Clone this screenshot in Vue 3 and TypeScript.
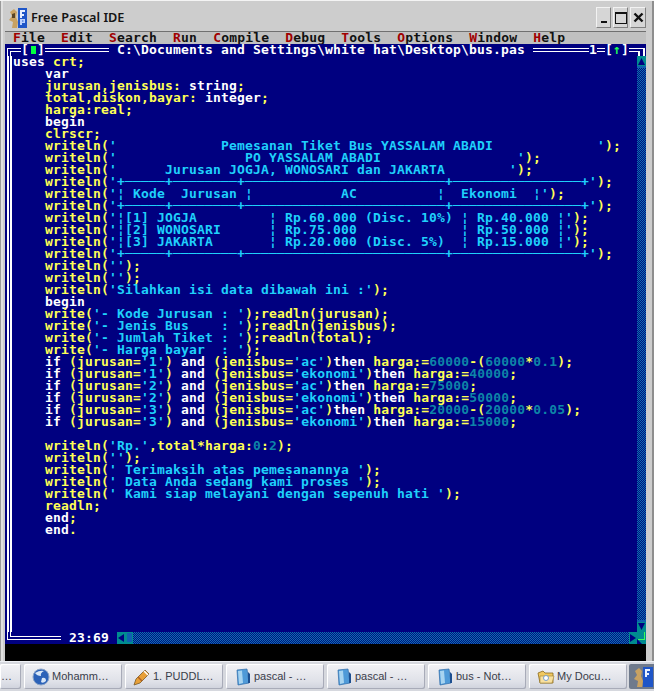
<script setup lang="ts">
type Tok = { t: string; c: string };

const rule = "'+" + '─'.repeat(5) + '+' + '─'.repeat(8) + '+' + '─'.repeat(25) + '+' + '─'.repeat(16) + "+'";
const row = (a: string, b: string, c: string) =>
  "writeln('" + ('¦[' + a).padEnd(19) + '¦ ' + b.padEnd(22) + '¦ ' + c.padEnd(10) + "¦');";

const source: string[] = [
  'uses crt;',
  '    var',
  '    jurusan,jenisbus: string;',
  '    total,diskon,bayar: integer;',
  '    harga:real;',
  '    begin',
  '    clrscr;',
  "    writeln('" + ' '.repeat(13) + 'Pemesanan Tiket Bus YASSALAM ABADI' + ' '.repeat(13) + "');",
  "    writeln('" + ' '.repeat(16) + 'PO YASSALAM ABADI' + ' '.repeat(17) + "');",
  "    writeln('" + ' '.repeat(6) + 'Jurusan JOGJA, WONOSARI dan JAKARTA' + ' '.repeat(8) + "');",
  '    writeln(' + rule + ');',
  "    writeln('¦ Kode  Jurusan ¦" + ' '.repeat(11) + 'AC' + ' '.repeat(10) + '¦  Ekonomi  ¦' + "');",
  '    writeln(' + rule + ');',
  '    ' + row('1] JOGJA', 'Rp.60.000 (Disc. 10%)', 'Rp.40.000'),
  '    ' + row('2] WONOSARI', 'Rp.75.000', 'Rp.50.000'),
  '    ' + row('3] JAKARTA', 'Rp.20.000 (Disc. 5%)', 'Rp.15.000'),
  '    writeln(' + rule + ');',
  "    writeln('');",
  "    writeln('');",
  "    writeln('Silahkan isi data dibawah ini :');",
  '    begin',
  "    write('- Kode Jurusan : ');readln(jurusan);",
  "    write('- Jenis Bus    : ');readln(jenisbus);",
  "    write('- Jumlah Tiket : ');readln(total);",
  "    write('- Harga bayar  : ');",
  "    if (jurusan='1') and (jenisbus='ac')then harga:=60000-(60000*0.1);",
  "    if (jurusan='1') and (jenisbus='ekonomi')then harga:=40000;",
  "    if (jurusan='2') and (jenisbus='ac')then harga:=75000;",
  "    if (jurusan='2') and (jenisbus='ekonomi')then harga:=50000;",
  "    if (jurusan='3') and (jenisbus='ac')then harga:=20000-(20000*0.05);",
  "    if (jurusan='3') and (jenisbus='ekonomi')then harga:=15000;",
  '',
  "    writeln('Rp.',total*harga:0:2);",
  "    writeln('');",
  "    writeln(' Terimaksih atas pemesanannya ');",
  "    writeln(' Data Anda sedang kami proses ');",
  "    writeln(' Kami siap melayani dengan sepenuh hati ');",
  '    readln;',
  '    end;',
  '    end.',
];

const tokenize = (s: string): Tok[] => {
  const re = /('[^']*')|(\d[\d.]*)|\b(uses|var|string|integer|begin|end|if|and|then)\b|(\s+)|([^'\d\s]+?(?=\b(?:uses|var|string|integer|begin|end|if|and|then)\b|'|\d|\s|$))/g;
  const out: Tok[] = [];
  for (const m of s.matchAll(re)) {
    if (m[1]) out.push({ t: m[1], c: 'str' });
    else if (m[2]) out.push({ t: m[2], c: 'num' });
    else if (m[3]) out.push({ t: m[3], c: 'kw' });
    else out.push({ t: m[0], c: 'id' });
  }
  return out;
};

const lines = source.map(tokenize);

const menu = ['File', 'Edit', 'Search', 'Run', 'Compile', 'Debug', 'Tools', 'Options', 'Window', 'Help'];

const tasks = [
  { label: 'Mohamm…', icon: 'globe' },
  { label: '1. PUDDL…', icon: 'pencil' },
  { label: 'pascal - …', icon: 'doc' },
  { label: 'pascal - …', icon: 'doc' },
  { label: 'bus - Not…', icon: 'doc' },
  { label: 'My Docu…', icon: 'folder' },
];
</script>

<template>
  <div class="screen">
    <div class="window">
      <header class="titlebar">
        <svg class="app-icon" width="20" height="22" viewBox="0 0 20 22">
          <path d="M2 5 L6 2 L9 5 L8 10 L10 15 L9 21 L4 21 L5 15 L1 13 L4 9 Z" fill="#c9a262" />
          <path d="M4 7 L7 6 L7 11 L4 11 Z" fill="#5a4526" />
          <rect x="10" y="1" width="9" height="20" fill="#1f56c8" />
          <path d="M12 3h5v2h-3v2h2v2h-2v2h-2z" fill="#e8f0ff" />
          <path d="M12 12h5v4h-3v2h-2zM14 13.5v1h1.5v-1z" fill="#bcd2ff" fill-rule="evenodd" />
        </svg>
        <span class="app-title">Free Pascal IDE</span>
        <div class="win-btns">
          <button class="win-btn"><i class="min-glyph"></i></button>
          <button class="win-btn"><i class="max-glyph"></i></button>
          <button class="win-btn close">
            <svg width="11" height="11" viewBox="0 0 11 11"><path d="M1.5 1.5 L9.5 9.5 M9.5 1.5 L1.5 9.5" stroke="#111" stroke-width="2.4" /></svg>
          </button>
        </div>
      </header>

      <div class="client">
        <nav class="menubar">
          <span v-for="m in menu" :key="m" class="menu-item"><b class="hot">{{ m[0] }}</b>{{ m.slice(1) }}</span>
        </nav>

        <div class="editor">
          <div class="frame-top">
            <svg class="corner" width="8" height="12" viewBox="0 0 8 12">
              <path d="M2 12V4h6v1H3v7zM5 12V7h3v1H6v4z" fill="#fff" />
            </svg>
            <i class="dbl w8"></i>
            <span class="cell">[</span><span class="cell"><i class="close-box"></i></span><span class="cell">]</span>
            <i class="dbl w64"></i>
            <span class="path"> C:\Documents and Settings\white hat\Desktop\bus.pas </span>
            <i class="dbl grow"></i>
            <span class="path">1</span>
            <i class="dbl w8"></i>
            <span class="cell">[</span><span class="cell up">↑</span><span class="cell">]</span>
            <i class="dbl w8"></i>
            <svg class="corner wide" width="9" height="12" viewBox="0 0 9 12">
              <path d="M0 4h8v8H6V5H0zM0 7h3v5H1V8H0z" fill="#fff" />
            </svg>
          </div>

          <div class="frame-body">
            <div class="frame-left"></div>
            <div class="code">
              <div v-for="(line, i) in lines" :key="i" class="line"><span v-for="(tok, j) in line" :key="j" :class="tok.c">{{ tok.t }}</span></div>
            </div>
            <div class="vscroll">
              <div class="arrow-cell">
                <svg width="9" height="12" viewBox="0 0 9 12"><path d="M4.5 2 L8 9 H1 Z" fill="#000080" /><rect y="10" width="9" height="2" fill="#1060b0" /></svg>
              </div>
              <div class="hatch grow"></div>
              <div class="arrow-cell">
                <svg width="9" height="12" viewBox="0 0 9 12"><rect width="9" height="2" fill="#1060b0" /><path d="M1 3 H8 L4.5 10 Z" fill="#000080" /></svg>
              </div>
            </div>
          </div>

          <div class="frame-bottom">
            <svg class="corner" width="8" height="12" viewBox="0 0 8 12">
              <path d="M2 0v8h6V7H3V0zM5 0v5h3V4H6V0z" fill="#fff" />
            </svg>
            <i class="dbl w48"></i>
            <span class="pos"> 23:69 </span>
            <span class="arrow-cell h">
              <svg width="8" height="12" viewBox="0 0 8 12"><path d="M1 6 L7 2 V10 Z" fill="#000080" /></svg>
            </span>
            <span class="arrow-cell h thumb"><i></i></span>
            <div class="hatch grow"></div>
            <span class="arrow-cell h">
              <svg width="8" height="12" viewBox="0 0 8 12"><path d="M7 6 L1 2 V10 Z" fill="#000080" /></svg>
            </span>
            <span class="arrow-cell h last">
              <svg width="9" height="12" viewBox="0 0 9 12"><path d="M7 0h1v8H1V7h6z" fill="#39ff5a" /><path d="M0 12 L0 7 L5 12Z" fill="#000080" /></svg>
            </span>
          </div>
        </div>

        <div class="black-strip"></div>
      </div>
    </div>

    <footer class="taskbar">
      <div class="task cut">…</div>
      <div v-for="(t, i) in tasks" :key="i" class="task">
        <svg v-if="t.icon === 'globe'" class="task-icon" width="18" height="18" viewBox="0 0 18 18">
          <circle cx="9" cy="9" r="8" fill="#2c62b8" stroke="#8aa4c8" />
          <path d="M3 5 Q8 2 12 3 Q8 5 9 8 Q5 8 3 5Z" fill="#d8e6f6" />
          <path d="M10 10 Q14 9 14 13 Q11 16 9 14Z" fill="#d8e6f6" />
        </svg>
        <svg v-else-if="t.icon === 'pencil'" class="task-icon" width="18" height="18" viewBox="0 0 18 18">
          <path d="M1 17 L3 11 L12 2 L16 6 L7 15 Z" fill="#e8a038" stroke="#7a5a28" stroke-width=".8" />
          <path d="M11 3 L15 7" stroke="#fff" stroke-width="1.5" />
          <path d="M5 9 L9 13" stroke="#b06020" stroke-width="1.4" />
        </svg>
        <svg v-else-if="t.icon === 'doc'" class="task-icon" width="18" height="18" viewBox="0 0 18 18">
          <path d="M3 2 L13 1 L15 15 L4 17 Z" fill="#4f9ad8" stroke="#2c6aa8" stroke-width=".7" />
          <path d="M4 3 L8 2.5 L9 15 L5 16 Z" fill="#a8d4f0" />
          <path d="M14 4 L16 6 V15 L14 15Z" fill="#1d4f90" />
        </svg>
        <svg v-else class="task-icon" width="18" height="18" viewBox="0 0 18 18">
          <path d="M1 5 L6 3 L8 5 L16 5 L16 15 L3 15 Z" fill="#f0c860" stroke="#8a6a20" stroke-width=".8" />
          <path d="M3 8 L17 8 L15 15 L3 15 Z" fill="#f8e0a0" stroke="#a08030" stroke-width=".6" />
          <circle cx="9" cy="10" r="2.5" fill="#fff" stroke="#7aa0c8" />
        </svg>
        <span class="task-label">{{ t.label }}</span>
      </div>
      <div class="task active">
        <svg width="20" height="22" viewBox="0 0 20 22">
          <path d="M2 5 L6 2 L9 5 L8 10 L10 15 L9 21 L4 21 L5 15 L1 13 L4 9 Z" fill="#c9a262" />
          <rect x="10" y="1" width="10" height="20" fill="#1f56c8" />
          <path d="M12 3h5v2h-3v2h2v2h-2v2h-2z" fill="#e8f0ff" />
        </svg>
      </div>
    </footer>
  </div>
</template>

<style>
html, body { margin: 0; padding: 0; background: #d0d0d0; }
</style>

<style scoped>
.screen {
  width: 654px;
  height: 691px;
  display: flex;
  flex-direction: column;
  overflow: hidden;
  background: #d4d6dc;
}
.window {
  height: 661px;
  box-sizing: border-box;
  padding-top: 3px;
  padding-left: 5px;
  padding-right: 8px;
  display: flex;
  flex-direction: column;
  background: #cdcdcd;
  border-top: 1px solid #f4f4f4;
  box-shadow: inset 1px 0 0 #9a9a9a, inset 3px 0 0 #e0e0e0, inset -2px 0 0 #8e8e8e;
}
.titlebar {
  height: 27px;
  flex: none;
  display: flex;
  align-items: center;
  box-sizing: border-box;
  padding-left: 3px;
}
.app-icon { flex: none; }
.app-title {
  margin-left: 3px;
  font: 600 12.7px/1 "Noto Sans", sans-serif;
  color: #151515;
}
.win-btns {
  margin-left: auto;
  display: flex;
  gap: 2px;
  align-items: center;
}
.win-btn {
  width: 15px;
  height: 21px;
  padding: 0;
  margin: 0;
  border: 0;
  border-top: 1px solid #f2f2f2;
  border-left: 1px solid #f2f2f2;
  border-right: 1px solid #808080;
  border-bottom: 1px solid #808080;
  background: #d6d6d6;
  box-sizing: border-box;
  display: flex;
  align-items: center;
  justify-content: center;
}
.close { width: 16px; }
.min-glyph { width: 6px; height: 2px; background: #111; margin-top: 9px; }
.max-glyph { width: 10px; height: 9px; border: 1px solid #111; border-top-width: 2px; box-sizing: content-box; }

.client {
  flex: 1;
  display: flex;
  flex-direction: column;
  min-height: 0;
  border-top: 1px solid #707070;
  font: 700 13px/12px "DejaVu Sans Mono", monospace;
  letter-spacing: 0.174px;
}
.menubar {
  height: 12px;
  flex: none;
  display: flex;
  gap: 16px;
  padding-left: 8px;
  background: #c0c0c0;
  color: #111;
  white-space: pre;
}
.hot { color: #a00000; font-weight: 700; }

.editor {
  height: 600px;
  flex: none;
  background: #000080;
  display: flex;
  flex-direction: column;
  color: #fff;
}
.frame-top, .frame-bottom {
  height: 12px;
  flex: none;
  display: flex;
  white-space: pre;
}
.corner { flex: none; display: block; }
.dbl {
  display: block;
  flex: none;
  box-sizing: border-box;
  height: 4px;
  margin-top: 4px;
  border-top: 1px solid #fff;
  border-bottom: 1px solid #fff;
}
.dbl.grow { flex: 1; }
.w8 { width: 8px; }
.w48 { width: 48px; }
.w64 { width: 64px; }
.cell { width: 8px; flex: none; text-align: center; }
.close-box { display: block; width: 5px; height: 8px; margin: 2px 0 0 2px; background: #00ff40; }
.up { color: #22ff55; }

.frame-body {
  flex: 1;
  display: flex;
  min-height: 0;
}
.frame-left {
  width: 8px;
  flex: none;
  box-sizing: border-box;
  margin-left: 2px;
  margin-right: -2px;
  border-left: 2px solid #fff;
}
.frame-left::after {
  content: "";
  display: block;
  height: 100%;
  width: 2px;
  margin-left: 1px;
  background: #fff;
}
.code {
  flex: 1;
  min-width: 0;
}
.line { height: 12px; white-space: pre; }
.id { color: #ffff55; }
.kw { color: #ffffff; }
.str { color: #1fd0fb; }
.num { color: #0d85a8; }

.vscroll {
  width: 9px;
  flex: none;
  display: flex;
  flex-direction: column;
}
.arrow-cell {
  height: 12px;
  flex: none;
  background: #008c90;
  display: block;
}
.arrow-cell svg { display: block; }
.arrow-cell.h { width: 8px; }
.arrow-cell.last { width: 9px; }
.thumb { padding: 1px; box-sizing: border-box; }
.thumb i { display: block; width: 5px; height: 9px; margin-left: 1px; background: #1060b0; }
.hatch {
  background: repeating-conic-gradient(#0e70b0 0 25%, #001080 0 50%) 0 0 / 2px 2px;
}
.grow { flex: 1; }
.pos { flex: none; color: #fff; }
.black-strip { flex: 1; background: #000; }

.taskbar {
  height: 30px;
  flex: none;
  box-sizing: border-box;
  display: flex;
  gap: 3px;
  padding: 2px 0;
  background: #d6d8de;
  border-top: 1px solid #eef0f4;
  font: 11px/1 "Liberation Sans", sans-serif;
  color: #3a3d4a;
}
.task {
  width: 98px;
  flex: none;
  box-sizing: border-box;
  display: flex;
  align-items: center;
  gap: 2px;
  padding-left: 8px;
  background: linear-gradient(#f2f2f5, #dfe1e8 70%, #cfd2dc);
  border-radius: 2px;
  box-shadow: inset -1px -1px 0 #a8abb8, inset 1px 1px 0 #fff;
}
.cut { width: 21px; padding-left: 1px; }
.task-icon { flex: none; }
.task-label { white-space: pre; }
.active {
  width: 30px;
  padding-left: 4px;
  margin-left: -1px;
  background: #6f7a8c;
  box-shadow: none;
}
</style>
